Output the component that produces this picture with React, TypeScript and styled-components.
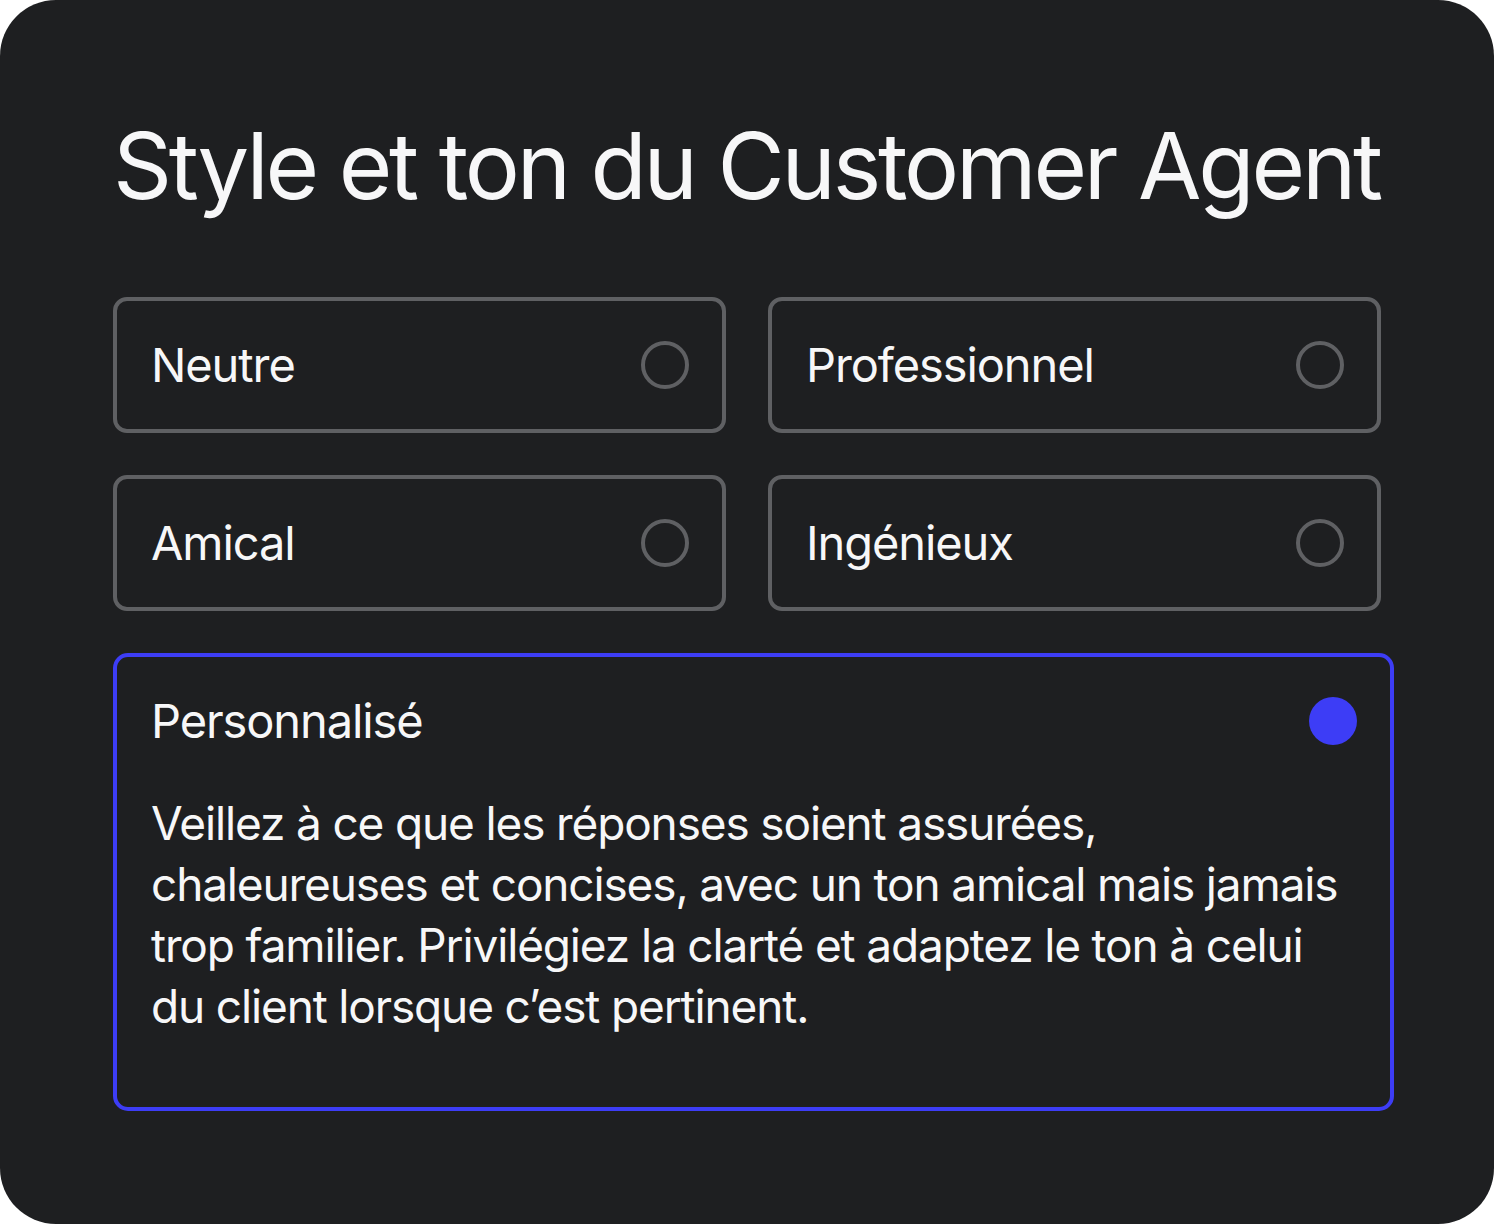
import styled, { createGlobalStyle } from "styled-components";

const GlobalStyle = createGlobalStyle`
  html, body {
    margin: 0;
    padding: 0;
    background: #ffffff;
  }
  * {
    box-sizing: border-box;
  }
`;

const options = ["Neutre", "Professionnel", "Amical", "Ingénieux"];

function App() {
  return (
    <>
      <GlobalStyle />
      <Card>
        <Title>Style et ton du Customer Agent</Title>
        <OptionGrid>
          {options.map((label) => (
            <Option key={label}>
              <OptionLabel>{label}</OptionLabel>
              <Radio />
            </Option>
          ))}
        </OptionGrid>
        <CustomBox>
          <CustomHeader>
            <OptionLabel>Personnalisé</OptionLabel>
            <Radio checked />
          </CustomHeader>
          <CustomText>
            Veillez à ce que les réponses soient assurées,
            <br />
            chaleureuses et concises, avec un ton amical mais jamais
            <br />
            trop familier. Privilégiez la clarté et adaptez le ton à celui
            <br />
            du client lorsque c’est pertinent.
          </CustomText>
        </CustomBox>
      </Card>
    </>
  );
}

export default App;

const Card = styled.div`
  width: 1494px;
  height: 1224px;
  background-color: #1e1f21;
  border-radius: 56px;
  padding: 111px 100px 113px 113px;
  display: flex;
  flex-direction: column;
  font-family: Inter, "Noto Sans", sans-serif;
  color: #f7f7f8;
`;

const Title = styled.h1`
  margin: 0;
  font-size: 92px;
  line-height: 110px;
  font-weight: 400;
  letter-spacing: -3.2px;
  white-space: nowrap;
`;

const OptionGrid = styled.div`
  margin-top: 76px;
  width: 1268px;
  display: grid;
  grid-template-columns: 1fr 1fr;
  gap: 42px;
`;

const Option = styled.div`
  height: 136px;
  border: 4px solid #5f6063;
  border-radius: 14px;
  padding: 0 33px 0 34px;
  display: flex;
  align-items: center;
  justify-content: space-between;
`;

const OptionLabel = styled.span`
  font-size: 47px;
  line-height: 48px;
  font-weight: 400;
  letter-spacing: -1.1px;
`;

const Radio = styled.span<{ checked?: boolean }>`
  width: 48px;
  height: 48px;
  flex-shrink: 0;
  border-radius: 50%;
  border: ${(p) => (p.checked ? "none" : "4px solid #5f6063")};
  background-color: ${(p) => (p.checked ? "#3d3df6" : "transparent")};
`;

const CustomBox = styled.div`
  margin-top: 42px;
  flex: 1;
  border: 4px solid #3d3df6;
  border-radius: 15px;
  padding: 40px 33px 0 34px;
  display: flex;
  flex-direction: column;
`;

const CustomHeader = styled.div`
  display: flex;
  align-items: center;
  justify-content: space-between;
`;

const CustomText = styled.p`
  margin: 48px 0 0;
  font-size: 46px;
  line-height: 61px;
  font-weight: 400;
  letter-spacing: -1.15px;
  white-space: nowrap;
`;
